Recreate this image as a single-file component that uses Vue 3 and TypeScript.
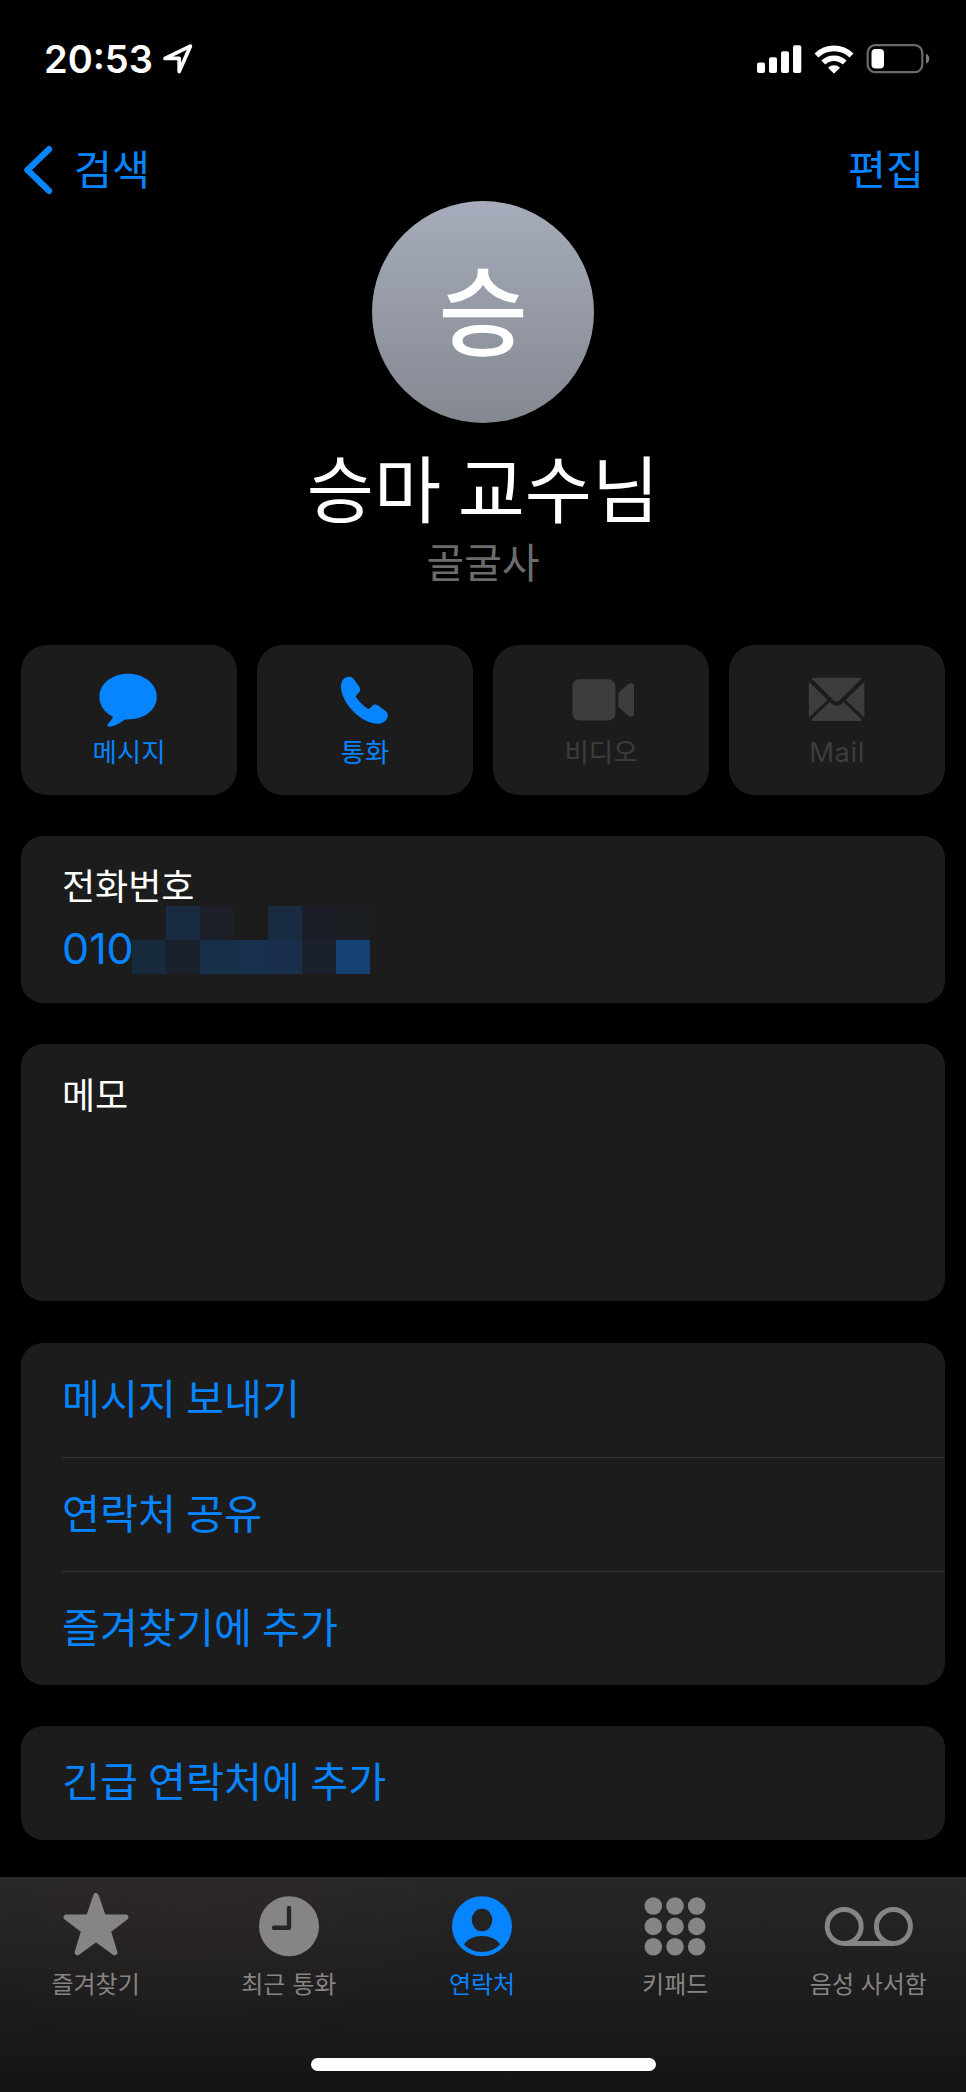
<script setup lang="ts">
interface Action {
  id: 'message' | 'call' | 'video' | 'mail'
  label: string
  enabled: boolean
}

interface Tab {
  id: 'favorites' | 'recents' | 'contacts' | 'keypad' | 'voicemail'
  label: string
}

const actions: Action[] = [
  { id: 'message', label: '메시지', enabled: true },
  { id: 'call', label: '통화', enabled: true },
  { id: 'video', label: '비디오', enabled: false },
  { id: 'mail', label: 'Mail', enabled: false },
]

const links: string[] = ['메시지 보내기', '연락처 공유', '즐겨찾기에 추가']

const tabs: Tab[] = [
  { id: 'favorites', label: '즐겨찾기' },
  { id: 'recents', label: '최근 통화' },
  { id: 'contacts', label: '연락처' },
  { id: 'keypad', label: '키패드' },
  { id: 'voicemail', label: '음성 사서함' },
]
const activeTab: Tab['id'] = 'contacts'

// Tint of each block that hides the rest of the phone number, row by row
const mask: string[] = [
  'transparent', '#182b40', '#1c1f27', 'transparent', '#192b40', '#1b1e26', '#1b1e22',
  '#182a3e', '#1a2029', '#17304a', '#17304b', '#182e4a', '#1b212c', '#144274',
]

const keys: number[] = [0, 1, 2, 3, 4, 5, 6, 7, 8]
</script>

<template>
  <div class="screen">
    <header class="status">
      <span class="time">20:53</span>
      <svg class="location" width="32" height="32" viewBox="0 0 32 32">
        <path d="M3 15.4 L28.4 3.2 L17.2 28.6 V15.4 Z" fill="none" stroke="#fff" stroke-width="3.7" stroke-linejoin="round" />
      </svg>
      <div class="indicators">
        <svg width="45" height="29" viewBox="0 0 45 29">
          <g fill="#fff">
            <rect x="0" y="17.5" width="8" height="10.5" rx="2" />
            <rect x="12" y="12.2" width="8" height="15.8" rx="2" />
            <rect x="24" y="6.3" width="8" height="21.7" rx="2" />
            <rect x="36" y="0.3" width="8.3" height="27.7" rx="2" />
          </g>
        </svg>
        <svg width="40" height="29" viewBox="0 0 40 29">
          <g fill="none" stroke="#fff" stroke-width="5.6">
            <path d="M2.5 10.5 A25 25 0 0 1 37.5 10.5" />
            <path d="M9.3 17.6 A15.3 15.3 0 0 1 30.7 17.6" />
          </g>
          <path d="M14 22.8 A8.5 8.5 0 0 1 26 22.8 L20.7 28.1 Q20 28.7 19.3 28.1 Z" fill="#fff" />
        </svg>
        <svg class="battery" width="64" height="30" viewBox="0 0 64 30">
          <rect x="1.7" y="1.2" width="54.6" height="27" rx="7.5" fill="none" stroke="#6a6a6a" stroke-width="2.2" />
          <rect x="5.5" y="5" width="12.5" height="19.5" rx="4" fill="#fff" />
          <path d="M60 9.8 Q63.3 11.2 63.3 14.7 Q63.3 18.2 60 19.6 Z" fill="#7c7c7c" />
        </svg>
      </div>
    </header>

    <nav class="nav">
      <a class="back">
        <svg width="30" height="50" viewBox="0 0 30 50">
          <path d="M26 4.2 L4.5 25 L26 45.8" fill="none" stroke="currentColor" stroke-width="6.4" stroke-linecap="round" stroke-linejoin="round" />
        </svg>
        <span>검색</span>
      </a>
      <a>편집</a>
    </nav>

    <section class="profile">
      <div class="avatar">승</div>
      <h1>승마 교수님</h1>
      <p>골굴사</p>
    </section>

    <main class="content">
      <div class="actions">
        <button v-for="a in actions" :key="a.id" class="action" :class="{ disabled: !a.enabled }">
          <svg width="66" height="56" viewBox="0 0 66 56" fill="currentColor">
            <path v-if="a.id === 'message'" d="M32 1.8 C48.2 1.8 60.8 11.9 60.8 24.8 C60.8 38 48.6 47.6 31 47.4 H29 C24.5 50.8 18.4 54.4 13.4 54.8 C11.1 55 10.8 53.3 12 51.8 C13.8 49.7 15.8 47.4 17 44.8 C8.2 40.3 3.4 33.3 3.4 24.8 C3.4 11.9 16 1.8 32 1.8 Z" />
            <path v-else-if="a.id === 'call'" transform="translate(-1 0)" d="M17.4 4.7 C19.5 4.5 21.2 5 22.6 6.8 L28.2 14.8 C29.7 17 29.5 18.9 27.9 20.6 L25.2 23.4 C24.6 24.1 24.7 24.8 25.2 25.5 C28.2 29.6 32.2 33.6 36.4 36.6 C37.1 37.1 37.8 37.1 38.5 36.5 L41.2 33.9 C43 32.3 44.9 32.2 47 33.6 L54.7 38.9 C56.7 40.3 57.2 42.1 56.7 44.6 C55.7 49 51.8 51.8 47.2 51.8 C30.5 52 10 31.3 10 14.6 C10 9.5 12.6 5.1 17.4 4.7 Z" />
            <g v-else-if="a.id === 'video'" transform="translate(2.4 0)">
              <rect x="2" y="7.3" width="43" height="41.2" rx="7" />
              <path d="M48 20.8 L57.6 12.2 C60.3 9.9 63.6 10.8 63.6 14 V41.4 C63.6 44.6 60.4 45.7 57.6 43.4 L48 35 Z" />
            </g>
            <g v-else transform="translate(-.4 0)">
              <path d="M5.2 9.8 L24 28 L5.2 45.6 Z" />
              <path d="M60.8 9.8 L42 28 L60.8 45.6 Z" />
              <path d="M9 5.8 H57 Q58.6 6 57.5 7 L36 28.3 Q33 30.8 30 28.3 L8.5 7 Q7.4 6 9 5.8 Z" />
              <path d="M26 30 L28 31.9 Q33 35.4 38 31.9 L40 30 L57.5 47 Q58.6 48.6 57 49 H9 Q7.4 48.6 8.5 47 Z" />
            </g>
          </svg>
          <span :class="a.id">{{ a.label }}</span>
        </button>
      </div>

      <section class="card phone">
        <h2>전화번호</h2>
        <div class="number">
          <span>010</span>
          <div class="mask">
            <i v-for="(color, i) in mask" :key="i" :style="{ background: color }"></i>
          </div>
        </div>
      </section>

      <section class="card memo">
        <h2>메모</h2>
      </section>

      <section class="card list">
        <a v-for="link in links" :key="link">{{ link }}</a>
      </section>

      <section class="card list">
        <a>긴급 연락처에 추가</a>
      </section>
    </main>

    <footer class="tabbar">
      <div class="tabs">
        <a v-for="t in tabs" :key="t.id" class="tab" :class="{ active: t.id === activeTab }">
          <svg v-if="t.id === 'favorites'" width="66" height="66" viewBox="0 0 66 66">
            <path d="M33 2.8 L40.3 24.3 H62.6 L44.9 37.7 L51.6 59.4 L33 46 L14.4 59.4 L21.1 37.7 L3.4 24.3 H25.7 Z" fill="currentColor" stroke="currentColor" stroke-width="5.6" stroke-linejoin="round" />
          </svg>
          <svg v-else-if="t.id === 'recents'" width="66" height="66" viewBox="0 0 66 66">
            <circle cx="33" cy="33.3" r="30" fill="currentColor" />
            <path d="M33 15 V34.8 H18" fill="none" stroke="#2a2525" stroke-width="4.4" stroke-linecap="round" stroke-linejoin="round" />
          </svg>
          <svg v-else-if="t.id === 'contacts'" width="66" height="66" viewBox="0 0 66 66">
            <circle cx="33" cy="33.3" r="30" fill="currentColor" />
            <ellipse cx="33" cy="27" rx="10.3" ry="11.3" fill="#232323" />
            <path d="M15 51.5 C18.5 46 25 43 33 43 C41 43 47.5 46 51 51.5 C46 56.5 40 58.9 33 58.9 C26 58.9 20 56.5 15 51.5 Z" fill="#232323" />
          </svg>
          <svg v-else-if="t.id === 'keypad'" width="66" height="66" viewBox="0 0 66 66">
            <circle v-for="k in keys" :key="k" :cx="11.3 + (k % 3) * 21.7" :cy="13 + Math.floor(k / 3) * 20.4" r="8.8" fill="currentColor" />
          </svg>
          <svg v-else width="92" height="66" viewBox="0 0 92 66">
            <g fill="none" stroke="currentColor" stroke-width="5">
              <circle cx="22.2" cy="33.4" r="17" />
              <circle cx="71.4" cy="33.4" r="17" />
              <path d="M22.2 50.4 H71.4" />
            </g>
          </svg>
          <span>{{ t.label }}</span>
        </a>
      </div>
      <div class="home"></div>
    </footer>
  </div>
</template>

<style>
body {
  margin: 0;
  background: #000;
}
</style>

<style scoped>
.screen {
  display: flex;
  flex-direction: column;
  width: 966px;
  height: 2092px;
  overflow: hidden;
  background: #000;
  color: #fff;
  font-family: Inter, "Noto Sans CJK KR", sans-serif;
}

h1,
h2,
p {
  margin: 0;
  font-weight: 400;
}

.status {
  display: flex;
  align-items: center;
  box-sizing: border-box;
  height: 118px;
  padding: 0 36px 0 44px;
}

.time {
  width: 118px;
  font-size: 38px;
  font-weight: 600;
  line-height: 46px;
}

.location {
  flex: none;
}

.indicators {
  display: flex;
  align-items: center;
  gap: 12px;
  margin-left: auto;
}

.nav {
  display: flex;
  align-items: center;
  justify-content: space-between;
  height: 83px;
  padding: 0 42px 0 23px;
  font-size: 41.3px;
  line-height: 50px;
  color: #0784ff;
}

.nav a {
  display: flex;
  align-items: center;
}

.back svg {
  margin-right: 21px;
  margin-top: 21px;
}

.nav span,
.nav > a:last-child {
  padding-top: 20px;
}

.profile {
  display: flex;
  flex-direction: column;
  align-items: center;
  height: 444px;
}

.avatar {
  display: flex;
  align-items: center;
  justify-content: center;
  box-sizing: border-box;
  flex: none;
  width: 222px;
  height: 222px;
  padding-top: 2px;
  border-radius: 50%;
  background: linear-gradient(#a6acbb, #848890);
  font-size: 97px;
  font-weight: 500;
  line-height: 116px;
}

h1 {
  margin-top: 24px;
  font-size: 73px;
  line-height: 88px;
  word-spacing: -4px;
}

.profile p {
  margin-top: 3px;
  font-size: 41px;
  line-height: 50px;
  color: #6c6c6c;
}

.content {
  display: flex;
  flex-direction: column;
  gap: 41.2px;
  padding: 0 21px;
}

.actions {
  display: grid;
  grid-template-columns: repeat(4, 1fr);
  gap: 20px;
  height: 150px;
}

.action {
  display: flex;
  flex-direction: column;
  align-items: center;
  padding: 27px 0 0;
  border: 0;
  border-radius: 26px;
  background: #1c1c1c;
  color: #0784ff;
  font-family: inherit;
  font-size: 26.5px;
  line-height: 32px;
}

.action span {
  margin-top: 8px;
}

.action .mail {
  font-size: 27.5px;
  letter-spacing: 0.5px;
}

.action.disabled {
  color: #3d3d3f;
}

.card {
  box-sizing: border-box;
  border-radius: 22px;
  background: #1c1c1c;
}

h2 {
  font-size: 36px;
  line-height: 44px;
}

.phone {
  height: 167px;
  padding: 29px 0 0 41px;
}

.number {
  display: flex;
  height: 68px;
  margin-top: -3px;
  font-size: 43px;
  line-height: 50px;
  color: #0784ff;
}

.number span {
  width: 70px;
  padding-top: 17px;
}

.mask {
  display: grid;
  grid-template-columns: repeat(7, 34px);
  grid-template-rows: repeat(2, 34px);
}

.memo {
  height: 257px;
  padding: 30px 0 0 41px;
}

.list {
  display: flex;
  flex-direction: column;
  padding-left: 41px;
}

.list a {
  box-sizing: border-box;
  height: 114px;
  font-size: 41.3px;
  line-height: 113px;
  word-spacing: -1.5px;
  color: #0784ff;
}

.list a + a {
  border-top: 1px solid #323232;
  line-height: 112px;
}

.tabbar {
  display: flex;
  flex-direction: column;
  align-items: center;
  justify-content: space-between;
  box-sizing: border-box;
  height: 215px;
  margin-top: auto;
  padding: 16px 2px 21px 0;
  background:
    radial-gradient(ellipse 320px 150px at 190px 20px, rgba(70, 45, 45, 0.24), transparent),
    linear-gradient(#272727, #141414);
}

.tabs {
  display: grid;
  grid-template-columns: repeat(5, 193.2px);
}

.tab {
  display: flex;
  flex-direction: column;
  align-items: center;
  font-size: 24px;
  line-height: 30px;
  color: #868484;
}

.tab span {
  margin-top: 11px;
}

.tab.active {
  color: #0784ff;
}

.home {
  width: 345px;
  height: 13px;
  margin-left: 2px;
  border-radius: 7px;
  background: #fff;
}
</style>
